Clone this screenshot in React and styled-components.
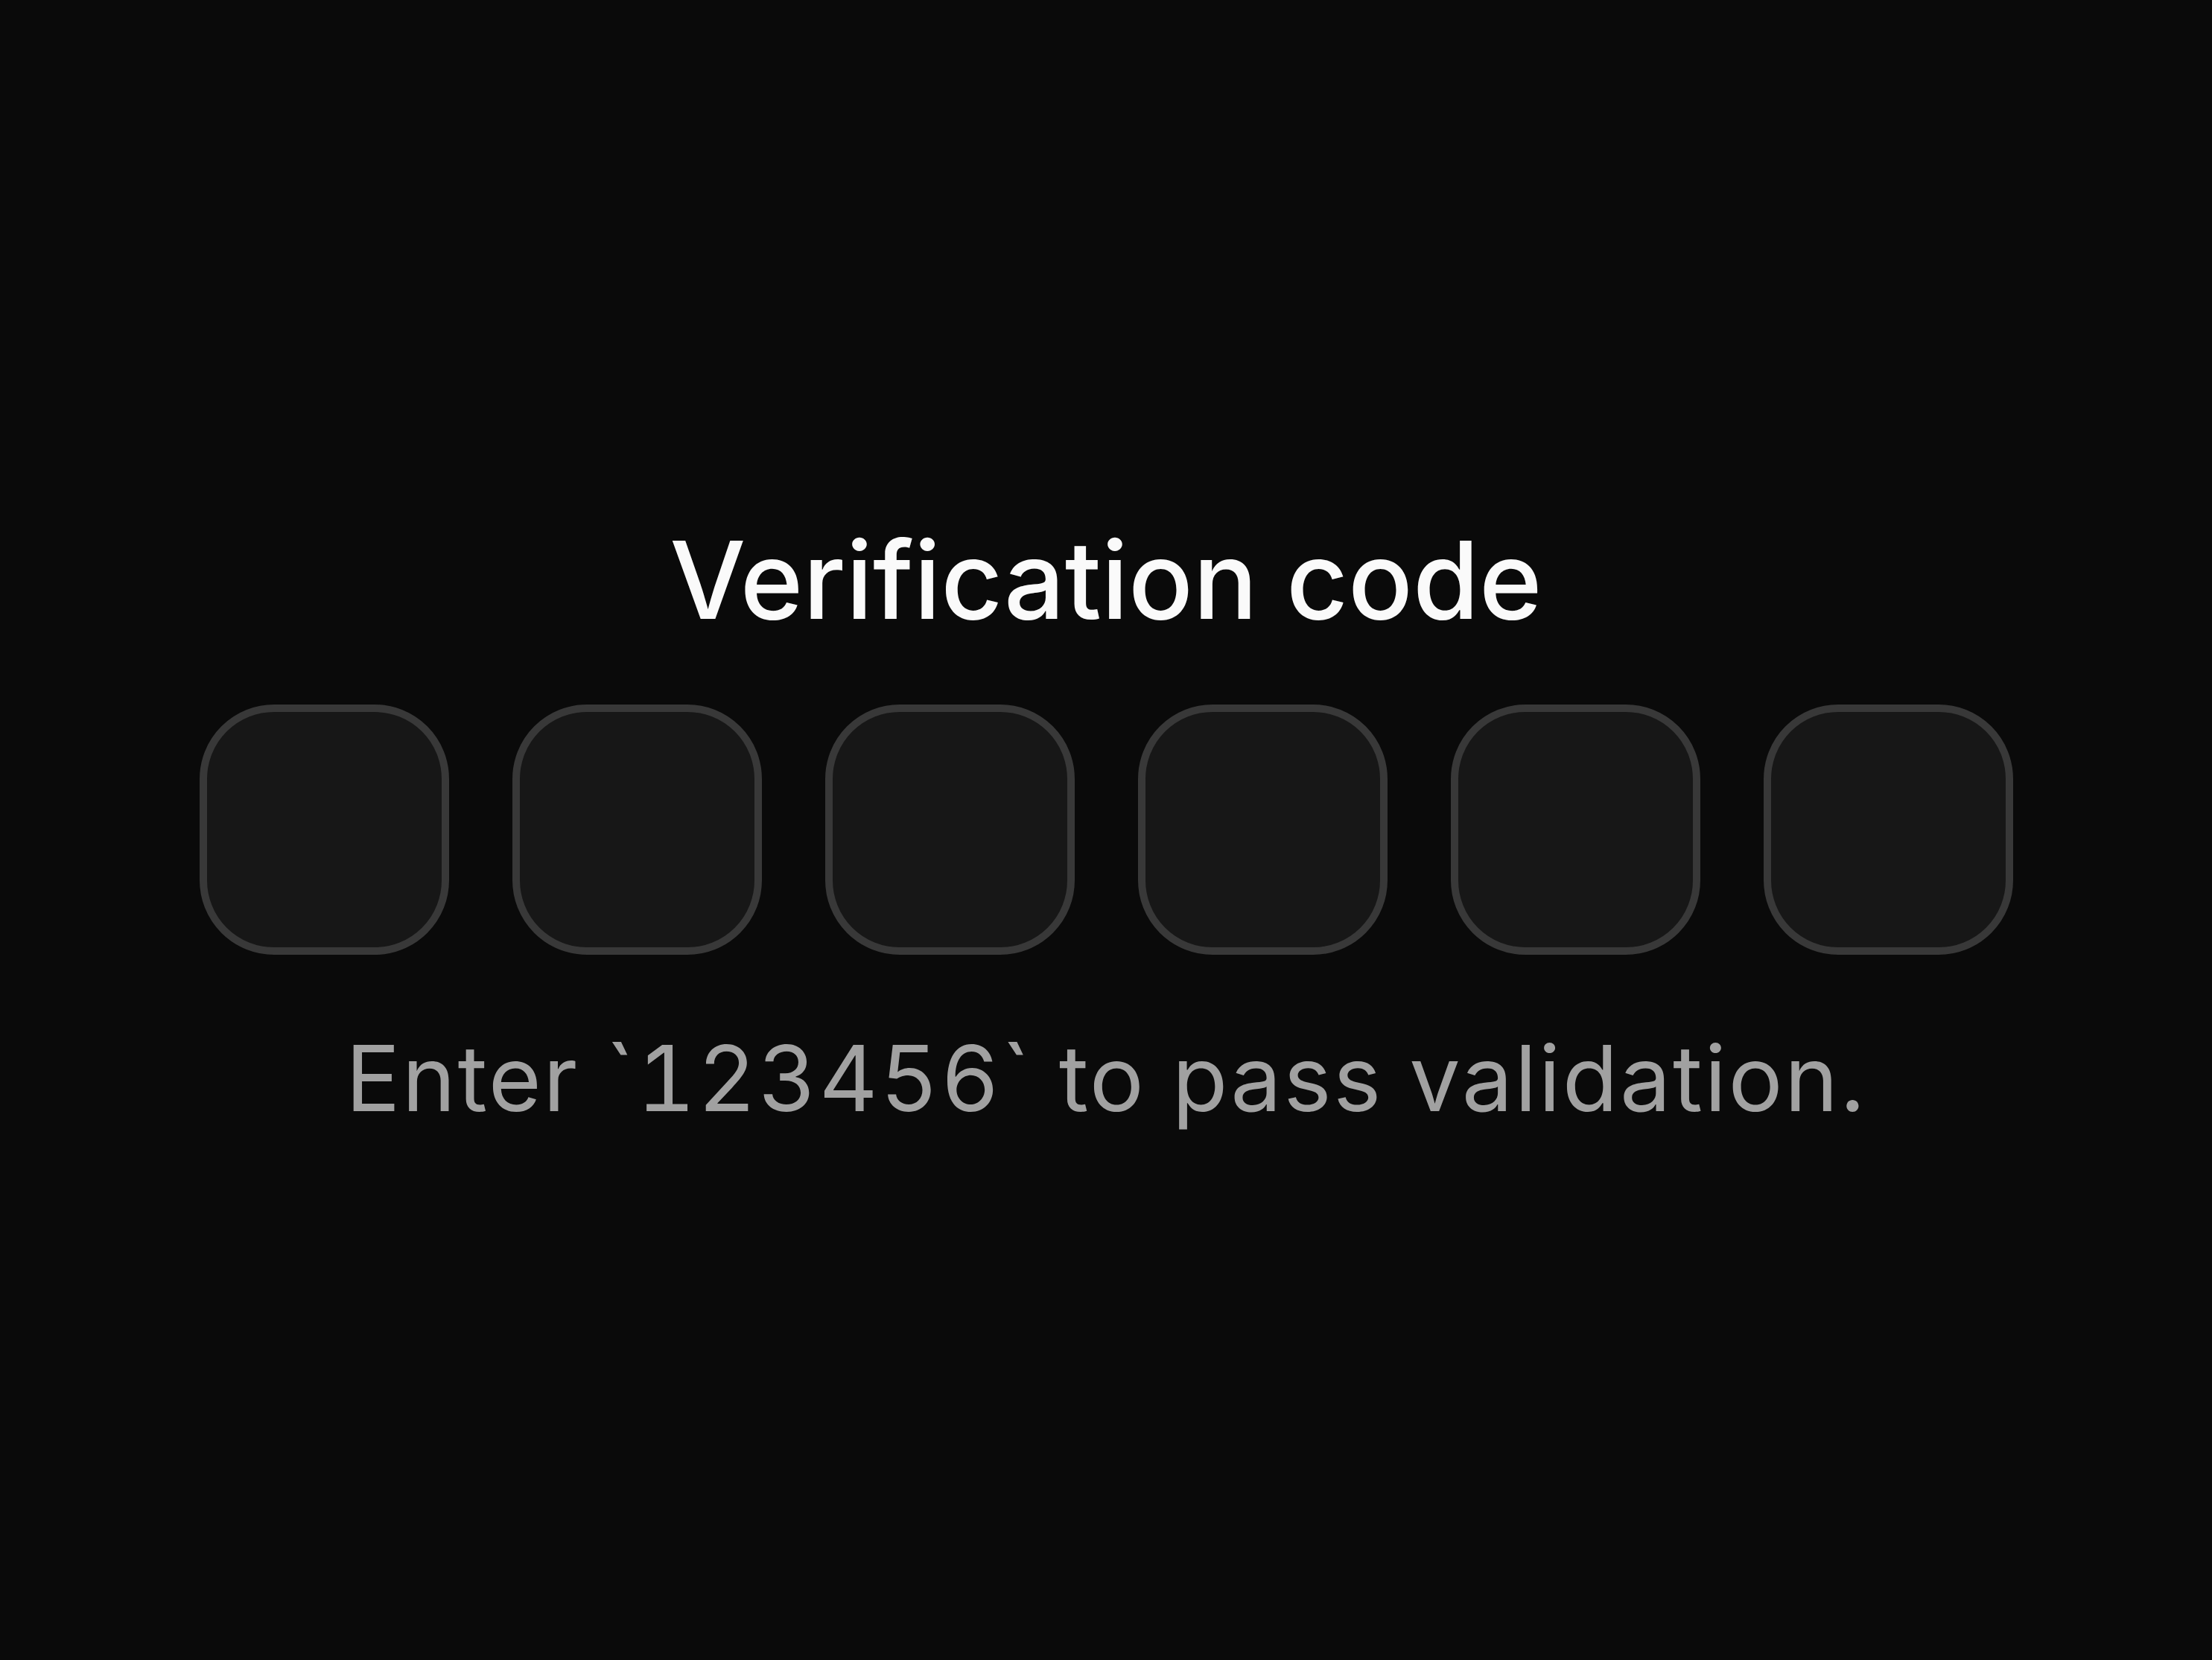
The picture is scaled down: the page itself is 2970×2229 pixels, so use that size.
import styled, { createGlobalStyle } from "styled-components";

const GlobalStyle = createGlobalStyle`
    html, body {
        margin: 0;
        padding: 0;
        background: #0a0a0a;
    }
    body {
        font-family: Inter, "Noto Sans", "Liberation Sans", sans-serif;
        color: #fafafa;
    }
`

const Page = styled.main`
    min-height: 100vh;
    display: flex;
    flex-direction: column;
    align-items: center;
    justify-content: center;
    padding-bottom: 14px;
    box-sizing: border-box;
`

const Title = styled.h1`
    margin: 0;
    font-size: 144px;
    line-height: 1;
    font-weight: 500;
    color: #fafafa;
`

const Slots = styled.div`
    display: flex;
    gap: 85px;
    margin-top: 95px;
`

const Slot = styled.input`
    width: 335px;
    height: 336px;
    box-sizing: border-box;
    border: 10px solid #383838;
    border-radius: 100px;
    background: #171717;
    color: #fafafa;
    font-family: inherit;
    font-size: 140px;
    text-align: center;
    outline: none;
    padding: 0;
`

const Hint = styled.p`
    margin: 105px 0 0;
    font-size: 122px;
    line-height: 1;
    font-weight: 400;
    letter-spacing: 2.5px;
    font-variant-numeric: tabular-nums;
    color: #a1a1a1;
`

const App = () => {
    return (
        <>
            <GlobalStyle />
            <Page>
                <Title>Verification code</Title>
                <Slots>
                    {[0, 1, 2, 3, 4, 5].map((i) => (
                        <Slot key={i} maxLength={1} inputMode="numeric" aria-label={`Digit ${i + 1}`} />
                    ))}
                </Slots>
                <Hint>Enter `123456` to pass validation.</Hint>
            </Page>
        </>
    )
}

export default App
